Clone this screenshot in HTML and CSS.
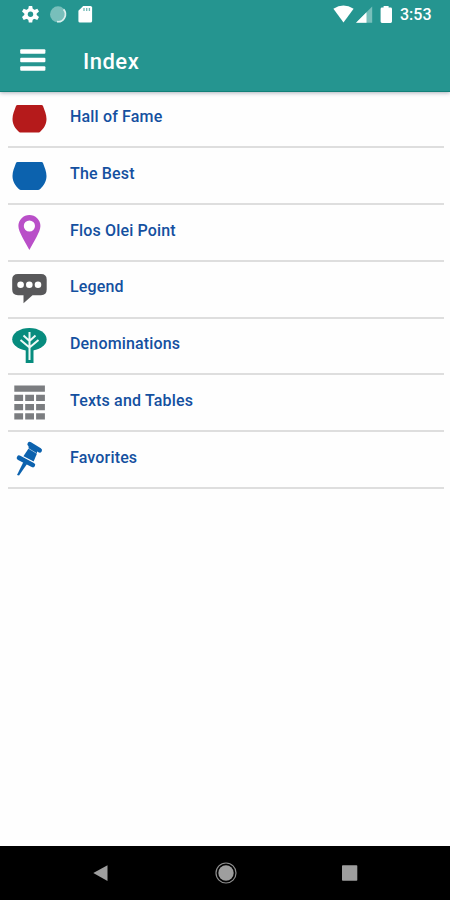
FILE: index.html
```html
<!DOCTYPE html>
<html lang="en">
<head>
<meta charset="utf-8">
<title>Index</title>
<link rel="stylesheet" href="styles.css">
</head>
<body>
<div class="screen">
  <header class="header">
    <div class="status">
      <svg class="status-left" width="80" height="28" viewBox="0 0 80 28">
        <g fill="#fff">
          <circle cx="15.5" cy="14.3" r="6"/>
          <path d="M13.8 6h3.4l.7 4h-4.8zM13.8 22.6h3.4l.7-4h-4.8zM7 11.6l1.7-2.9 3.7 1.5-2.3 4.1zM24 11.6l-1.7-2.9-3.7 1.5 2.3 4.1zM7 17l1.7 2.9 3.7-1.5-2.3-4.1zM24 17l-1.7 2.9-3.7-1.5 2.3-4.1z"/>
        </g>
        <circle cx="15.5" cy="14.3" r="2.7" fill="#259590"/>
        <circle cx="43" cy="14.3" r="8" fill="#78bfbb"/>
        <path d="M48.6 9.4A7.5 7.5 0 0 1 42 21.7" fill="none" stroke="#d9efed" stroke-width="1.7"/>
        <path d="M68.2 6H75.5a1.6 1.6 0 0 1 1.6 1.6V21a1.6 1.6 0 0 1-1.6 1.6H65a1.6 1.6 0 0 1-1.6-1.6V10.8z" fill="#fff"/>
        <path d="M69 8v3M71.7 8v3M74.4 8v3" stroke="#259590" stroke-width="1.3" opacity=".65"/>
      </svg>
      <svg class="status-right" width="62" height="28" viewBox="0 0 62 28">
        <path d="M0.4 8.7Q10.4 2.3 20.6 8.7L10.5 22.4z" fill="#fff"/>
        <path d="M39.2 6.4V22.8H23z" fill="#78bfbb"/>
        <path d="M33.5 12.2V22.8H23z" fill="#fff"/>
        <path d="M50.6 6h5v1.6h2a1.4 1.4 0 0 1 1.4 1.4v12.6a1.4 1.4 0 0 1-1.4 1.4h-8.6a1.4 1.4 0 0 1-1.4-1.4V9a1.4 1.4 0 0 1 1.4-1.4h1.6z" fill="#fff"/>
      </svg>
      <span class="clock">3:53</span>
    </div>
    <div class="toolbar">
      <svg class="menu" width="26" height="24" viewBox="0 0 26 24">
        <g fill="#fff"><rect x=".2" y="1.2" width="25.2" height="4.6" rx="1"/><rect x=".2" y="9.7" width="25.2" height="4.6" rx="1"/><rect x=".2" y="18.2" width="25.2" height="4.6" rx="1"/></g>
      </svg>
      <h1 class="title">Index</h1>
    </div>
  </header>
  <ul class="list">
    <li class="row">
      <svg class="icon" viewBox="0 0 40 40"><path d="M7.6 6H31.4Q32.7 6 33.1 7.2C34.6 11.5 36.5 15.5 36.5 20C36.5 25.5 33.4 30 30.2 32.7Q29.2 33.6 28 33.6H11Q9.8 33.6 8.8 32.7C5.6 30 2.5 25.5 2.5 20C2.5 15.5 4.4 11.5 5.9 7.2Q6.3 6 7.6 6z" fill="#b51a1b"/></svg>
      <span class="label">Hall of Fame</span>
    </li>
    <li class="row">
      <svg class="icon" viewBox="0 0 40 40"><path d="M7.6 6H31.4Q32.7 6 33.1 7.2C34.6 11.5 36.5 15.5 36.5 20C36.5 25.5 33.4 30 30.2 33Q29.2 34 28 34H11Q9.8 34 8.8 33C5.6 30 2.5 25.5 2.5 20C2.5 15.5 4.4 11.5 5.9 7.2Q6.3 6 7.6 6z" fill="#0c62ae"/></svg>
      <span class="label">The Best</span>
    </li>
    <li class="row">
      <svg class="icon" viewBox="0 0 40 40"><path fill-rule="evenodd" d="M19.4 2A11 11 0 0 1 30.4 13C30.4 19 23.5 29 19.4 37C15.3 29 8.4 19 8.4 13A11 11 0 0 1 19.4 2zM19.4 7.4a5.6 5.6 0 1 0 0 11.2a5.6 5.6 0 1 0 0-11.2z" fill="#b94fc8"/></svg>
      <span class="label">Flos Olei Point</span>
    </li>
    <li class="row">
      <svg class="icon" viewBox="0 0 40 40"><path d="M8 5H31Q36.7 5 36.7 10.5V20.5Q36.7 26.2 31 26.2H22.5L13.5 34.3V26.2H8Q2.2 26.2 2.2 20.5V10.5Q2.2 5 8 5z" fill="#58585a"/><g fill="#fff"><circle cx="10.6" cy="15.7" r="3.3"/><circle cx="19.3" cy="15.7" r="3.3"/><circle cx="28" cy="15.7" r="3.3"/></g></svg>
      <span class="label">Legend</span>
    </li>
    <li class="row">
      <svg class="icon" viewBox="0 0 40 40"><ellipse cx="19.4" cy="13.3" rx="17.2" ry="11.4" fill="#078c7e"/><path d="M15.7 22h7.8v15h-7.8z" fill="#078c7e"/><path d="M19.5 6V34M19.5 15L13.5 9.5M19.5 15L25.5 9.5M19.5 21.5L10.5 14M19.5 21.5L28.5 14" fill="none" stroke="#effaf7" stroke-width="2"/></svg>
      <span class="label">Denominations</span>
    </li>
    <li class="row">
      <svg class="icon" viewBox="0 0 40 40"><path d="M4.3 2.4h30.6v6.3H4.3zM4.3 11.8h8.8v6.3H4.3zM15.2 11.8h8.8v6.3h-8.8zM26.1 11.8h8.8v6.3h-8.8zM4.3 21h8.8v6.3H4.3zM15.2 21h8.8v6.3h-8.8zM26.1 21h8.8v6.3h-8.8zM4.3 30.2h8.8v6.3H4.3zM15.2 30.2h8.8v6.3h-8.8zM26.1 30.2h8.8v6.3h-8.8z" fill="#7b7d80"/></svg>
      <span class="label">Texts and Tables</span>
    </li>
    <li class="row">
      <svg class="icon" viewBox="0 0 40 40"><g stroke="#0c62ae" fill="none" stroke-linecap="round"><path d="M19.8 4.3L29.6 10.2" stroke-width="4.8"/><path d="M9.2 17.8L22.8 25" stroke-width="4.8"/></g><path d="M18.6 8.6L27 13.6 23.6 21.6 13.4 16.2z" fill="#0c62ae"/><path d="M18.6 5.6L27 10.6V13.6L18.6 8.6z" fill="#0c62ae"/><path d="M13.4 22L17 24 9 35.6 7 35z" fill="#0c62ae"/><path d="M18 8.2L27.6 14M12.6 16.2L24 22.2" stroke="#fff" stroke-width=".6" opacity=".6"/></svg>
      <span class="label">Favorites</span>
    </li>
  </ul>
  <nav class="navbar">
    <svg width="24" height="24" viewBox="0 0 24 24"><path d="M4.3 12L18.5 4.3V20z" fill="#9e9e9e"/></svg>
    <svg width="24" height="24" viewBox="0 0 24 24"><circle cx="12" cy="12" r="10" fill="none" stroke="#8e8e8e" stroke-width="1.2"/><circle cx="12" cy="12" r="7.7" fill="#9e9e9e"/></svg>
    <svg width="24" height="24" viewBox="0 0 24 24"><rect x="4" y="4.3" width="15.3" height="15.4" rx=".8" fill="#9e9e9e"/></svg>
  </nav>
</div>
</body>
</html>
```
FILE: styles.css
```css
* { box-sizing: border-box; }

body {
  margin: 0;
  background: #fefefe;
  font-family: Roboto, "Liberation Sans", sans-serif;
}

svg { display: block; flex: none; }

.screen {
  display: flex;
  flex-direction: column;
  height: 900px;
}

.header {
  height: 92px;
  flex: none;
  background: #259590;
  border-bottom: 1px solid #128179;
  box-shadow: 0 1px 4px rgba(40, 50, 80, .38);
  color: #fff;
  z-index: 1;
}

.status {
  display: flex;
  align-items: center;
  height: 28px;
  padding: 0 18px 0 15px;
}

.status-right { margin-left: auto; margin-right: 5px; }

.clock {
  width: 32px;
  font-size: 16px;
  font-weight: 500;
  line-height: 28px;
  padding-top: 2px;
  white-space: nowrap;
}

.toolbar {
  display: flex;
  align-items: center;
  height: 64px;
  padding-left: 20px;
}

.title {
  margin: 3px 0 0 37px;
  font-size: 22px;
  font-weight: 500;
  line-height: 30px;
  letter-spacing: .5px;
}

.list {
  flex: 1;
  margin: -.5px 6px 0 8px;
  padding: 0;
  list-style: none;
}

.row {
  display: flex;
  height: 56.75px;
  padding: 7.5px 0 0 2px;
  border-bottom: 2px solid #dedede;
}

.icon { width: 40px; height: 40px; }

.label {
  margin-left: 20px;
  color: #1450a0;
  font-size: 16px;
  font-weight: 500;
  line-height: 36px;
  letter-spacing: .16px;
}

.navbar {
  display: flex;
  justify-content: space-between;
  height: 54.5px;
  padding: 15.5px 88px 0 89px;
  background: #000;
}
```
